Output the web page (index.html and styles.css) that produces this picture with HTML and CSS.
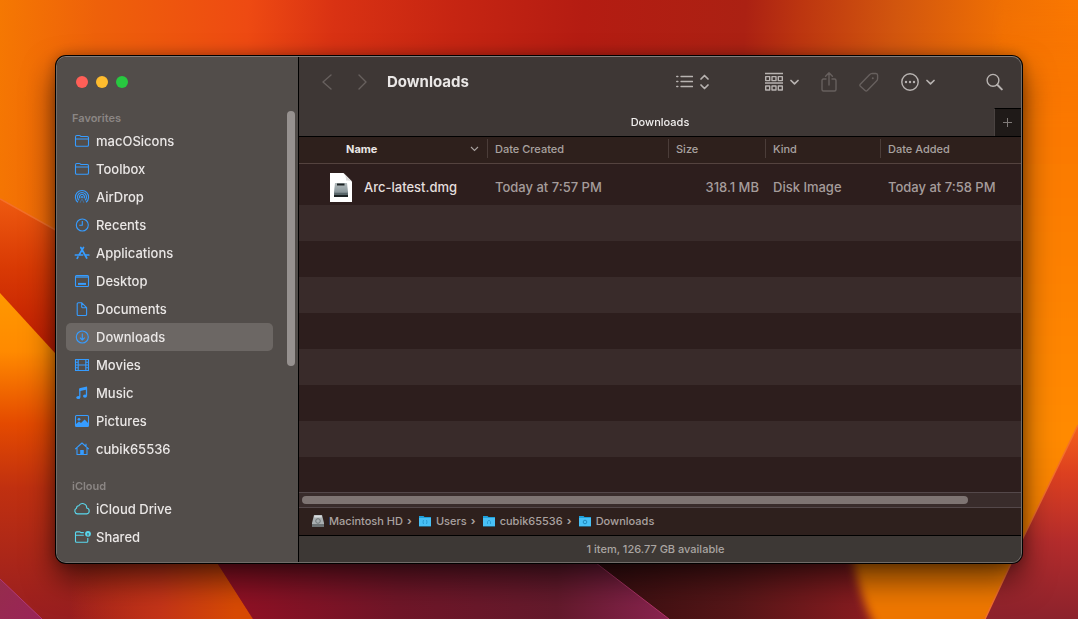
FILE: index.html
```html
<!DOCTYPE html>
<html lang="en">
<head>
<meta charset="utf-8">
<title>Downloads</title>
<link rel="stylesheet" href="styles.css">
</head>
<body>
<svg class="wallpaper" viewBox="0 0 1078 619" preserveAspectRatio="none" aria-hidden="true">
  <defs>
    <linearGradient id="sky" x1="0" x2="1078" y1="0" y2="60" gradientUnits="userSpaceOnUse">
      <stop offset="0" stop-color="#f57802"/><stop offset=".09" stop-color="#ee610a"/><stop offset=".23" stop-color="#ee4a12"/><stop offset=".31" stop-color="#d93213"/><stop offset=".42" stop-color="#c62512"/><stop offset=".54" stop-color="#b41c12"/><stop offset=".69" stop-color="#ab2113"/><stop offset=".74" stop-color="#bc3510"/><stop offset=".83" stop-color="#d2560e"/><stop offset=".93" stop-color="#f07003"/><stop offset="1" stop-color="#fb7800"/>
    </linearGradient>
    <linearGradient id="ray" x1="0" x2="0" y1="199" y2="350" gradientUnits="userSpaceOnUse"><stop offset="0" stop-color="#ee5a10"/><stop offset=".45" stop-color="#d93a04"/><stop offset="1" stop-color="#c01c02"/></linearGradient>
    <linearGradient id="flame" x1="0" x2="0" y1="293" y2="619" gradientUnits="userSpaceOnUse"><stop offset="0" stop-color="#ff9800"/><stop offset=".18" stop-color="#ff8a00"/><stop offset=".4" stop-color="#e44a00"/><stop offset=".6" stop-color="#c03010"/><stop offset="1" stop-color="#981e20"/></linearGradient>
    <linearGradient id="ember" x1="70" x2="235" y1="0" y2="0" gradientUnits="userSpaceOnUse"><stop offset="0" stop-color="#d43a10" stop-opacity="0"/><stop offset=".55" stop-color="#c43418"/><stop offset="1" stop-color="#d84a04"/></linearGradient>
    <linearGradient id="wine" x1="217" x2="670" y1="0" y2="0" gradientUnits="userSpaceOnUse"><stop offset="0" stop-color="#941024"/><stop offset=".4" stop-color="#701628"/><stop offset=".75" stop-color="#641a2c"/><stop offset="1" stop-color="#8a2450"/></linearGradient>
    <linearGradient id="dusk" x1="600" x2="870" y1="0" y2="0" gradientUnits="userSpaceOnUse"><stop offset="0" stop-color="#380e10"/><stop offset=".5" stop-color="#561618"/><stop offset="1" stop-color="#8a1c20"/></linearGradient>
    <linearGradient id="right" x1="0" x2="0" y1="0" y2="619" gradientUnits="userSpaceOnUse"><stop offset="0" stop-color="#f57000" stop-opacity="0"/><stop offset=".2" stop-color="#fb7800"/><stop offset=".7" stop-color="#ff8a00"/><stop offset="1" stop-color="#ee7600"/></linearGradient>
    <linearGradient id="rose" x1="0" x2="0" y1="425" y2="619" gradientUnits="userSpaceOnUse"><stop offset="0" stop-color="#f4601a"/><stop offset=".25" stop-color="#dc4020"/><stop offset=".6" stop-color="#b42c2c"/><stop offset="1" stop-color="#8c222c"/></linearGradient>
    <linearGradient id="plum" x1="0" x2="1" y1="0" y2="1"><stop offset="0" stop-color="#962c4c"/><stop offset="1" stop-color="#9a2458"/></linearGradient>
    <filter id="soft" x="-20%" y="-20%" width="140%" height="140%"><feGaussianBlur stdDeviation="5"/></filter>
  </defs>
  <rect width="1078" height="619" fill="url(#sky)"/>
  <path d="M0 199 250 340V619H0z" fill="url(#ray)"/>
  <path d="M0 199 70 238" stroke="#f4702a" stroke-width="1.5"/>
  <path d="M0 293 55 353 217 563 253 619H0z" fill="url(#flame)"/>
  <path d="M70 540H203L253 619H70z" fill="url(#ember)"/>
  <path d="M0 579 42 619H0z" fill="url(#plum)"/>
  <path d="M0 579 42 619" stroke="#b03a78" stroke-width="1"/>
  <path d="M560 530H900V630H640z" fill="url(#dusk)"/>
  <path d="M196 530H553L669 619H253z" fill="url(#wine)"/>
  <path d="M596 563 669 619" stroke="#b03468" stroke-width="1"/>
  <path d="M1000 0H1100V640H882Q858 600 850 540H1000z" fill="url(#right)" filter="url(#soft)"/>
  <path d="M1078 425 1022 540 985 619H1078z" fill="url(#rose)"/>
  <path d="M1078 425 1022 540 985 619" fill="none" stroke="#f4702a" stroke-width="1.5"/>
</svg>

<div class="desktop">
<div class="window">
  <aside class="sidebar">
    <div class="lights">
      <button class="light close" aria-label="Close"></button>
      <button class="light minimise" aria-label="Minimize"></button>
      <button class="light expand" aria-label="Zoom"></button>
    </div>
    <div class="sidebar-body">
      <nav class="places">
        <h2 class="group">Favorites</h2>
        <ul class="list">
          <li><a class="place" href="#"><svg class="ico" viewBox="0 0 16 16"><path d="M1.5 12V4.200q0-1.700 1.200-1.700h2.600q.6 0 1 .4l.7.6h6.300q1.200 0 1.200 1.200V12q0 1.300-1.200 1.300H2.700q-1.200 0-1.200-1.300zM1.500 6h13"/></svg>macOSicons</a></li>
          <li><a class="place" href="#"><svg class="ico" viewBox="0 0 16 16"><path d="M1.500 12V4.200q0-1.700 1.200-1.700h2.600q.6 0 1 .4l.7.6h6.300q1.200 0 1.200 1.200V12q0 1.300-1.200 1.300H2.700q-1.200 0-1.200-1.300zM1.500 6h13"/></svg>Toolbox</a></li>
          <li><a class="place" href="#"><svg class="ico" viewBox="0 0 16 16"><path d="M4 13.300a6.600 6.600 0 1 1 8 0M5 11.300a4.500 4.500 0 1 1 6 0M6.200 9.400a2.400 2.400 0 1 1 3.600 0"/><circle class="solid" cx="8" cy="8" r="1"/><path d="m6 13.800 2-4 2 4" stroke-opacity=".4"/></svg>AirDrop</a></li>
          <li><a class="place" href="#"><svg class="ico" viewBox="0 0 16 16"><circle cx="8.300" cy="8" r="6"/><path d="M8.300 4v4.300H5.200"/></svg>Recents</a></li>
          <li><a class="place" href="#"><svg class="ico" viewBox="0 0 16 16"><path class="thick" d="M9.500 2.500 5 10M6.800 2.500 12.700 13M4 11.900l-.8 1.400M1.400 10h7.200M11.300 10h3.500"/></svg>Applications</a></li>
          <li><a class="place" href="#"><svg class="ico" viewBox="0 0 16 16"><rect x="1.500" y="2.500" width="13" height="11" rx="1"/><path class="solid" fill-opacity=".65" d="M2 3h12v2H2z"/><path d="M4 10.900h8" stroke-width="2"/></svg>Desktop</a></li>
          <li><a class="place" href="#"><svg class="ico" viewBox="0 0 16 16"><path d="M3.200 13.500V3q0-1.200 1.200-1.200h3.400l4.800 4.900v6.800q0 1-1.100 1H4.300q-1.100 0-1.100-1zM7.700 2v3.800q0 1 1 1h3.700"/></svg>Documents</a></li>
          <li><a class="place selected" href="#" aria-current="page"><svg class="ico" viewBox="0 0 16 16"><circle cx="8.300" cy="8" r="6"/><path d="M8.300 4.600v6.200M5.900 8.600l2.400 2.400 2.400-2.400"/></svg>Downloads</a></li>
          <li><a class="place" href="#"><svg class="ico" viewBox="0 0 16 16"><rect x="1.500" y="2.500" width="13" height="11"/><path d="M4.200 2.500v11M11.800 2.500v11M4.200 8h7.600"/><path d="M1.500 5.200h2.500M1.500 8H4M1.500 10.800H4M12 5.200h2.500M12 8h2.500M12 10.800h2.500"/></svg>Movies</a></li>
          <li><a class="place" href="#"><svg class="ico" viewBox="0 0 16 16"><path class="solid" d="M5.300 3.200 13 1.600v3L5.300 6.200z"/><path d="M5.800 4v8M12.500 2.500v8.300" stroke-width="1.300"/><ellipse class="solid" cx="4.300" cy="12.500" rx="2" ry="1.600"/><ellipse class="solid" cx="11" cy="11.100" rx="2" ry="1.600"/></svg>Music</a></li>
          <li><a class="place" href="#"><svg class="ico" viewBox="0 0 16 16"><rect x="1.500" y="2.500" width="13" height="11" rx="1"/><circle class="solid" cx="5" cy="6.300" r="1.400"/><path class="solid" d="m2 13 0-2 3-2.400L7 10l3.600-3.400L14 10v3.200z"/></svg>Pictures</a></li>
          <li><a class="place" href="#"><svg class="ico" viewBox="0 0 16 16"><path d="M1.200 8.200 8 2l6.800 6.200M3 7v6.500h10V7M12 5V2.800"/><path class="solid" d="M6.200 9h3.600v5H6.200z"/></svg>cubik65536</a></li>
        </ul>
        <h2 class="group">iCloud</h2>
        <ul class="list cloud">
          <li><a class="place" href="#"><svg class="ico" viewBox="0 0 16 16"><path d="M3.500 12.900A3 3 0 0 1 2.500 7.200a2.500 2.500 0 0 1 2.300-2.400A4.200 4.200 0 0 1 12.700 7a3 3 0 0 1 .1 5.900z"/></svg>iCloud Drive</a></li>
          <li><a class="place" href="#"><svg class="ico" viewBox="0 0 16 16"><path d="M9.800 3.600H6.800l-.8-.7H2.500q-1 0-1 1v8.400q0 1 1 1h10.300q1 0 1-1V9M1.500 6.200h8.300"/><circle class="solid" cx="14" cy="4.800" r="2.900"/><path class="hole" d="M14 4v2.500"/></svg>Shared</a></li>
        </ul>
      </nav>
      <div class="vscroll"></div>
    </div>
  </aside>

  <main class="main">
    <header class="toolbar">
      <button class="tool dim" aria-label="Back"><svg width="12" height="18" viewBox="0 0 12 18"><path d="M10 2 2 9l8 7"/></svg></button>
      <button class="tool dim forward" aria-label="Forward"><svg width="12" height="18" viewBox="0 0 12 18"><path d="m2 2 7 7-7 7"/></svg></button>
      <h1 class="title">Downloads</h1>
      <button class="tool view" aria-label="View as list">
        <svg width="17" height="16" viewBox="0 0 17 16"><path d="M5 2.500h11.500M5 7.500h11.500M5 12.500h11.500" stroke-width="1.300"/><path d="M.8 2.500h1M.8 7.500h1M.8 12.500h1" stroke-width="1.600"/></svg>
        <svg width="9" height="16" viewBox="0 0 9 16"><path d="m1 5 3.500-3.500L8 5M1 11l3.500 3.500L8 11" stroke-width="1.700"/></svg>
      </button>
      <button class="tool" aria-label="Group items">
        <svg width="18" height="20" viewBox="0 0 18 20"><path d="M0 1.500h18M0 11h18"/><path d="M.7 4.600h4v4h-4zM7 4.600h4v4H7zM13.300 4.600h4v4h-4zM.7 14h4v4h-4zM7 14h4v4H7zM13.300 14h4v4h-4z"/></svg>
        <svg width="9" height="16" viewBox="0 0 9 16"><path d="m1 6.500 3.500 3.300L8 6.500" stroke-width="1.700"/></svg>
      </button>
      <button class="tool dim" aria-label="Share"><svg width="16" height="20" viewBox="0 0 16 20"><path d="M5 7H2.500Q1 7 1 8.500v9Q1 19 2.500 19h11q1.500 0 1.500-1.500v-9Q15 7 13.500 7H11M8 13V1M4.600 4.200 8 .8l3.400 3.400"/></svg></button>
      <button class="tool dim" aria-label="Edit tags"><svg width="20" height="20" viewBox="0 0 20 20"><path d="m1.300 12.300 9.200-9.600q1.200-1.200 2.800-1.300l3.600.1q1.700.1 1.700 1.700v3.300q0 1.500-1.100 2.600L8.300 18.500q-1.100 1-2.200 0l-4.700-4.200q-1-1-.1-2z"/><circle class="dot" cx="13.800" cy="6.300" r="1"/></svg></button>
      <button class="tool" aria-label="More actions">
        <svg width="18" height="18" viewBox="0 0 18 18"><circle cx="9" cy="9" r="8.200"/><circle class="dot" cx="5" cy="9" r="1.200"/><circle class="dot" cx="9" cy="9" r="1.200"/><circle class="dot" cx="13" cy="9" r="1.200"/></svg>
        <svg width="9" height="16" viewBox="0 0 9 16"><path d="m1 6.500 3.500 3.300L8 6.500" stroke-width="1.700"/></svg>
      </button>
      <button class="tool search" aria-label="Search"><svg width="17" height="18" viewBox="0 0 17 18"><circle cx="7" cy="7.300" r="5.900"/><path d="m11.300 11.800 4.500 4.600" stroke-width="2"/></svg></button>
    </header>

    <div class="tabs">
      <span class="tab">Downloads</span>
      <button class="new-tab" aria-label="New tab"><svg width="10" height="10" viewBox="0 0 10 10"><path d="M4.500 0v9M0 4.500h9"/></svg></button>
    </div>

    <div class="files">
      <table class="table">
        <colgroup><col><col class="c-created"><col class="c-size"><col class="c-kind"><col class="c-added"></colgroup>
        <thead>
          <tr>
            <th class="name" scope="col"><div class="head">Name<svg width="9" height="6" viewBox="0 0 9 6"><path d="m1 1 3.500 3.500L8 1"/></svg></div></th>
            <th scope="col"><div class="head">Date Created</div></th>
            <th scope="col"><div class="head">Size</div></th>
            <th scope="col"><div class="head">Kind</div></th>
            <th scope="col"><div class="head">Date Added</div></th>
          </tr>
        </thead>
        <tbody>
          <tr>
            <td><div class="file"><svg width="22" height="29" viewBox="0 0 22 29"><defs><linearGradient id="disk" x1="0" x2="0" y1="0" y2="1"><stop offset="0" stop-color="#b4bcbe"/><stop offset=".6" stop-color="#8e9a9e"/><stop offset="1" stop-color="#344044"/></linearGradient></defs><path fill="#fff" d="M0 0h13.500L22 8.500V29H0z"/><path fill="#dcdcdc" d="M13.500 0 22 8.500q-3-1.500-6-1 .500-4-2.500-7.500z"/><path fill="url(#disk)" d="M5 10h12l1 9v5H4v-5z"/><path fill="#1c2224" d="M7 10.500h7.500V12.500H7zM4 22h14v2H4z"/><path fill="#58666a" d="M4.500 20h13v2h-13z"/></svg>Arc-latest.dmg</div></td>
            <td>Today at 7:57 PM</td>
            <td class="num">318.1 MB</td>
            <td>Disk Image</td>
            <td>Today at 7:58 PM</td>
          </tr>
        </tbody>
      </table>
      <div class="stripes"></div>
    </div>

    <div class="hscroll"><div class="thumb"></div></div>

    <nav class="path">
      <a class="crumb" href="#"><svg width="12" height="12" viewBox="0 0 12 12"><path fill="#aab0b2" d="M2 0h8l2 8v4H0V8z"/><path fill="#6c7274" d="M0 9h12v3H0z"/><path fill="#d8dcde" d="M2.500.5h7l.4 2H2.100z"/><circle cx="6" cy="6" r="2.300" fill="none" stroke="#6e7678"/></svg>Macintosh HD</a><span class="sep">›</span>
      <a class="crumb" href="#"><svg width="12" height="12" viewBox="0 0 12 12"><path fill="#1ea0dc" d="M0 1h4.500l1 1H12v9.500H0z"/><path fill="#48c0f6" d="M0 3h12v8H0z"/><path fill="none" stroke="#2a9cd4" d="M4.500 5Q3.500 7 4.500 9M7.500 5q1 2 0 4"/></svg>Users</a><span class="sep">›</span>
      <a class="crumb" href="#"><svg width="12" height="12" viewBox="0 0 12 12"><path fill="#1ea0dc" d="M0 1h4.500l1 1H12v9.500H0z"/><path fill="#48c0f6" d="M0 3h12v8H0z"/><path fill="none" stroke="#2a9cd4" d="M4.500 9V6.500L6 5.200l1.500 1.300V9"/></svg>cubik65536</a><span class="sep">›</span>
      <a class="crumb" href="#"><svg width="12" height="12" viewBox="0 0 12 12"><path fill="#1ea0dc" d="M0 1h4.500l1 1H12v9.500H0z"/><path fill="#48c0f6" d="M0 3h12v8H0z"/><circle cx="6" cy="7" r="1.800" fill="none" stroke="#2088bc"/></svg>Downloads</a>
    </nav>
    <footer class="status">1 item, 126.77 GB available</footer>
  </main>
</div>
</div>
</body>
</html>
```
FILE: styles.css
```css
* { box-sizing: border-box; }
body {
  margin: 0;
  font-family: Inter, "Liberation Sans", sans-serif;
  font-size: 13px;
  color: #eae7e6;
  background: #b41c12;
}
button { border: 0; padding: 0; background: none; font: inherit; color: inherit; }
a { color: inherit; text-decoration: none; }
h1, h2, ul { margin: 0; padding: 0; list-style: none; }
svg { display: block; flex: none; }

.wallpaper { position: fixed; inset: 0; width: 100%; height: 100%; }
.desktop { position: relative; display: flex; min-height: 100vh; padding: 56px; }
.window {
  flex: 1;
  min-width: 0;
  display: flex;
  overflow: hidden;
  border: 1px solid #716c69;
  border-top-color: #827d7b;
  border-radius: 10px;
  background: #3e3735;
  box-shadow: 0 0 0 1px #000, 0 16px 32px rgba(0, 0, 0, .6), 0 0 14px rgba(0, 0, 0, .3);
}

/* Sidebar */
.sidebar { flex: none; width: 242px; background: #524d4a; border-right: 1px solid #000; }
.lights { display: flex; align-items: center; gap: 8px; height: 50px; padding-left: 19px; }
.light { width: 12px; height: 12px; border-radius: 50%; }
.close { background: #ff5f57; }
.minimise { background: #febc2e; }
.expand { background: #28c840; }
.sidebar-body { display: flex; justify-content: space-between; padding: 2px 3px 0 9px; }
.places { width: 207px; }
.group { padding-left: 6px; font-size: 11px; line-height: 18px; font-weight: 600; color: #8b8684; }
.list + .group { margin-top: 14px; }
.place {
  display: flex;
  align-items: center;
  gap: 6px;
  height: 28px;
  padding-left: 8px;
  border-radius: 5px;
  font-weight: 500;
}
.selected { background: #6c6764; }
.ico { width: 16px; height: 16px; overflow: visible; fill: none; stroke: #369cff; stroke-width: 1.1; stroke-linejoin: round; }
.ico .solid { fill: #369cff; stroke: none; }
.ico .thick { stroke-width: 1.7; stroke-linecap: round; }
.cloud .ico { stroke: #5ad8ee; }
.cloud .ico .solid { fill: #5ad8ee; }
.cloud .ico .hole { stroke: #524d4a; }
.vscroll { width: 8px; height: 255px; margin-top: 2px; border-radius: 4px; background: #96918f; }

/* Toolbar */
.main { flex: 1; min-width: 0; display: flex; flex-direction: column; }
.toolbar { display: flex; align-items: center; gap: 22px; height: 51px; padding: 0 18px 2px 22px; }
.tool { display: flex; align-items: center; gap: 7px; color: #b8b3b1; }
.tool svg { fill: none; stroke: currentColor; stroke-width: 1.4; stroke-linecap: round; stroke-linejoin: round; }
.tool .dot { fill: currentColor; stroke: none; }
.tool.dim { color: #67605e; }
.forward { margin-left: 2px; }
.title { font-size: 15px; font-weight: 700; margin-right: auto; margin-left: -4px; }
.view { margin-right: 34px; }
.search { margin-left: 29px; }

.tabs { display: flex; height: 29px; padding-left: 27px; border-bottom: 1px solid #000; }
.tab { flex: 1; font-size: 11px; line-height: 28px; font-weight: 500; text-align: center; color: #f2f0ef; }
.new-tab {
  display: flex;
  align-items: center;
  justify-content: center;
  width: 27px;
  border-top: 1px solid #000;
  border-left: 1px solid #4a4341;
  background: #1f1a18;
}
.new-tab svg { stroke: #7f7a78; }

/* File list */
.files { flex: 1; display: flex; flex-direction: column; background: #2d1e1d; }
.table { width: 100%; table-layout: fixed; border-spacing: 0; }
.c-created { width: 181px; }
.c-size { width: 97px; }
.c-kind { width: 115px; }
.c-added { width: 140px; }
.table th {
  height: 27px;
  padding: 2px 0 5px;
  border-bottom: 1px solid #54433f;
  background: #2e201c;
  font-size: 11px;
  font-weight: 500;
  text-align: left;
  color: #a9a2a0;
}
.head { display: flex; justify-content: space-between; align-items: center; height: 19px; padding-left: 7px; border-right: 1px solid #4b3d39; }
th:last-child .head { border-right: 0; }
.table .name { font-weight: 700; color: #eae6e5; }
.name .head { padding: 0 8px 0 47px; }
.head svg { fill: none; stroke: #a9a2a0; stroke-width: 1.1; }
.table td { height: 41px; padding: 5px 0 0 7px; color: #a59c9b; font-weight: 500; white-space: nowrap; }
.table .num { padding-right: 7px; text-align: right; }
.file { display: flex; align-items: center; gap: 12px; padding-left: 24px; color: #e4dfde; }
.stripes { flex: 1; background: repeating-linear-gradient(#392b2a 0 36px, #2d1e1d 36px 72px); }

.hscroll { height: 15px; padding: 3px; border-top: 1px solid #54484a; background: #392c2b; }
.thumb { width: 93%; height: 8px; border-radius: 4px; background: #7e7472; }

/* Path and status */
.path {
  display: flex;
  align-items: center;
  height: 28px;
  padding: 0 13px 2px;
  border-top: 1px solid #54484a;
  background: #2e201d;
  font-size: 11px;
  font-weight: 500;
  color: #aaa2a0;
}
.crumb { display: flex; align-items: center; gap: 5px; }
.sep { width: 16px; padding-left: 4px; font-weight: 700; }
.status { height: 27px; border-top: 1px solid #000; padding-right: 9px; line-height: 26px; font-size: 11px; font-weight: 500; text-align: center; color: #aaa5a2; background: #3d3835; }
```
